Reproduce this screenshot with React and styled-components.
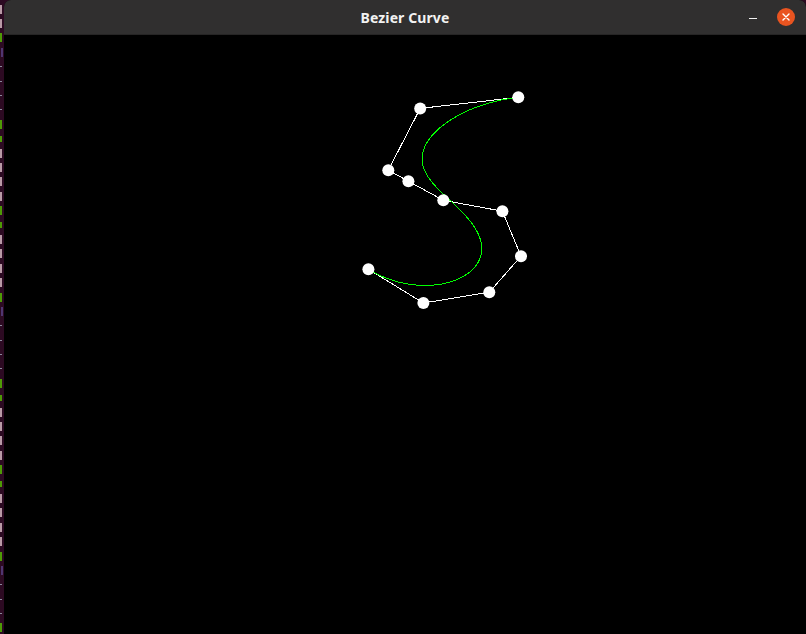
import React from 'react';
import styled, { createGlobalStyle } from 'styled-components';

const GlobalStyle = createGlobalStyle`
  html, body {
    margin: 0;
    padding: 0;
    background: #000;
  }
  body {
    width: 806px;
    height: 634px;
    overflow: hidden;
  }
`;

// control polygon, in page coordinates
const points = [
  [518.3, 97.3],
  [420.2, 108.4],
  [388.3, 170.2],
  [408.4, 181.2],
  [443.3, 200.3],
  [502.4, 211.2],
  [521, 256.2],
  [489.3, 292.2],
  [423.4, 303],
  [368.4, 269.3],
];

// de Casteljau, one curve of degree n-1
const bezierAt = (pts, t) => {
  let tmp = pts.map(p => [...p]);
  for (let k = tmp.length - 1; k > 0; k--) {
    for (let i = 0; i < k; i++) {
      tmp[i][0] = (1 - t) * tmp[i][0] + t * tmp[i + 1][0];
      tmp[i][1] = (1 - t) * tmp[i][1] + t * tmp[i + 1][1];
    }
  }
  return tmp[0];
};

const curvePoints = () => {
  const out = [];
  for (let s = 0; s <= 300; s++) out.push(bezierAt(points, s / 300));
  return out.map(p => p[0].toFixed(2) + ',' + p[1].toFixed(2)).join(' ');
};

// what peeks out of the terminal behind the window
const termRows = [
  't', 't', 'g', 'p', 'd', 'd', 'd', 'd', 'g', 'e', 't', 't', 't', 't', 'g', 'e',
  't', 't', 't', 't', 'g', 'p', 'd', 'd', 'd', 'd', 'g', 'e', 't', 't', 't', 't',
  'g', 'e', 't', 't', 't', 't', 'g', 'p', 'd', 'd', 'd', 'g',
];

const Screen = styled.div`
  display: flex;
  width: 806px;
  height: 634px;
  background: #2c0a22;
`;

const Terminal = styled.div`
  width: 4px;
  display: flex;
  flex-direction: column;
  padding-top: 2px;
  background: #2c0a22;
  overflow: hidden;
`;

const markColors = {
  t: '#b89aa6',
  g: '#4e9a06',
  e: '#4e9a06',
  p: '#4f3670',
  d: '#8a8a9c',
};

const TermRow = styled.div`
  height: 14.4px;
  flex: none;
  display: flex;
  align-items: center;
  &::before {
    content: '';
    display: block;
    width: ${p => (p.kind === 'd' ? '2px' : '2px')};
    height: ${p => (p.kind === 'd' ? '1px' : p.kind === 'e' ? '6px' : '9px')};
    margin-left: ${p => (p.kind === 'p' ? '1px' : '0')};
    background: ${p => markColors[p.kind]};
  }
`;

const Window = styled.div`
  flex: 1;
  display: flex;
  flex-direction: column;
  background: #000;
  border-radius: 7px 7px 0 0;
  overflow: hidden;
`;

const TitleBar = styled.header`
  height: 35px;
  flex: none;
  display: flex;
  align-items: center;
  justify-content: center;
  position: relative;
  background: #302f2f;
  border-bottom: 1px solid #262525;
  box-sizing: border-box;
`;

const Title = styled.h1`
  margin: 1px 0 0 0;
  font-family: 'Noto Sans', 'DejaVu Sans', sans-serif;
  font-size: 14px;
  font-weight: 700;
  color: #f2f2f2;
  letter-spacing: 0.1px;
`;

const Controls = styled.div`
  position: absolute;
  right: 11px;
  top: 0;
  height: 100%;
  display: flex;
  align-items: center;
  gap: 20px;
`;

const MinButton = styled.div`
  width: 8px;
  height: 1px;
  margin-top: 3px;
  background: #f2f2f2;
`;

const CloseButton = styled.div`
  width: 18px;
  height: 18px;
  border-radius: 50%;
  background: #e95420;
  display: flex;
  align-items: center;
  justify-content: center;
`;

const Canvas = styled.div`
  flex: 1;
  background: #000;
  svg {
    display: block;
  }
`;

export default function App() {
  const poly = points.map(p => p.join(',')).join(' ');
  return (
    <>
      <GlobalStyle />
      <Screen>
        <Terminal>
          {termRows.map((k, i) => (
            <TermRow key={i} kind={k} />
          ))}
        </Terminal>
        <Window>
          <TitleBar>
            <Title>Bezier Curve</Title>
            <Controls>
              <MinButton />
              <CloseButton>
                <svg width="8" height="8" viewBox="0 0 8 8">
                  <path d="M1 1 L7 7 M7 1 L1 7" stroke="#fff" strokeWidth="1.4" strokeLinecap="round" />
                </svg>
              </CloseButton>
            </Controls>
          </TitleBar>
          <Canvas>
            <svg width="802" height="599" viewBox="4 35 802 599">
              <polyline
                points={poly}
                fill="none"
                stroke="#fff"
                strokeWidth="1"
                shapeRendering="crispEdges"
              />
              <polyline
                points={curvePoints()}
                fill="none"
                stroke="#00ff00"
                strokeWidth="1"
                shapeRendering="crispEdges"
              />
              {points.map((p, i) => (
                <circle key={i} cx={p[0]} cy={p[1]} r="6" fill="#fff" />
              ))}
            </svg>
          </Canvas>
        </Window>
      </Screen>
    </>
  );
}
